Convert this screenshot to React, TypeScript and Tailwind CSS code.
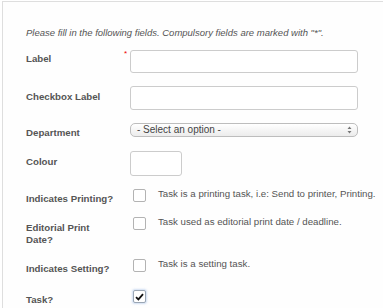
import React from "react";

const font = { fontFamily: '"Liberation Sans", Arial, sans-serif' };

function Checkbox({ checked }: { checked?: boolean }) {
  return (
    <div
      className={`flex h-[13px] w-[13px] shrink-0 items-center justify-center rounded-[2px] border bg-white ${
        checked ? "border-[#9aa6b4] shadow-[0_0_2px_1px_rgba(120,160,220,0.35)]" : "border-[#b3b3b3]"
      }`}
    >
      {checked && (
        <svg width="9" height="8" viewBox="0 0 9 8">
          <path d="M1 4.2 L3.4 6.4 L8 1.2" fill="none" stroke="#111" strokeWidth="1.8" />
        </svg>
      )}
    </div>
  );
}

function Row({
  label,
  required,
  height,
  pt,
  children,
}: {
  label: React.ReactNode;
  required?: boolean;
  height: string;
  pt: string;
  children?: React.ReactNode;
}) {
  return (
    <div className={`flex items-start ${height}`}>
      <div className={`flex w-[104px] shrink-0 justify-between pr-[3px] ${pt}`}>
        <span className="text-[9.7px] font-bold leading-[12px] text-[#555]">{label}</span>
        {required && <span className="-mt-[3px] text-[8px] leading-[8px] text-[#e00]">*</span>}
      </div>
      {children}
    </div>
  );
}

function CheckRow({ text, checked }: { text?: string; checked?: boolean }) {
  return (
    <div className="flex items-start pl-[3px]">
      <Checkbox checked={checked} />
      {text && (
        <span className="ml-[12px] -mt-[1px] whitespace-nowrap text-[9.7px] leading-[12px] text-[#555]">{text}</span>
      )}
    </div>
  );
}

export default function App() {
  return (
    <div style={font} className="h-[308px] w-[383px] overflow-hidden bg-white pl-[2px] pt-[1px]">
      <div className="h-full border-l border-t border-[#dedede] bg-[#fefefe] pl-[23px]">
        <p className="pt-[25px] text-[9.5px] italic leading-[12px] text-[#555]">
          Please fill in the following fields. Compulsory fields are marked with "*".
        </p>
        <div className="mt-[11px]">
          <Row label="Label" required height="h-[36px]" pt="pt-[3px]">
            <input className="h-[23px] w-[228px] rounded-[3px] border border-[#ccc] bg-white" />
          </Row>
          <Row label="Checkbox Label" height="h-[37px]" pt="pt-[5px]">
            <input className="h-[24px] w-[228px] rounded-[3px] border border-[#ccc] bg-white" />
          </Row>
          <Row label="Department" height="h-[28px]" pt="pt-[4px]">
            <div className="flex h-[14px] w-[228px] items-center justify-between rounded-[5px] border border-[#bdbdbd] bg-gradient-to-b from-white to-[#ececec] pl-[6px] pr-[5px]">
              <span className="text-[10px] leading-[12px] text-[#444]">- Select an option -</span>
              <svg width="5" height="8" viewBox="0 0 5 8">
                <path d="M0.5 3 L2.5 0.5 L4.5 3 Z M0.5 5 L2.5 7.5 L4.5 5 Z" fill="#777" />
              </svg>
            </div>
          </Row>
          <Row label="Colour" height="h-[38px]" pt="pt-[5px]">
            <input className="h-[25px] w-[52px] rounded-[3px] border border-[#ccc] bg-white" />
          </Row>
          <Row label="Indicates Printing?" height="h-[28px]" pt="pt-[4px]">
            <CheckRow text="Task is a printing task, i.e: Send to printer, Printing." />
          </Row>
          <Row
            label={
              <>
                Editorial Print
                <br />
                Date?
              </>
            }
            height="h-[42px]"
            pt="pt-[5px]"
          >
            <CheckRow text="Task used as editorial print date / deadline." />
          </Row>
          <Row label="Indicates Setting?" height="h-[31px]" pt="pt-[4px]">
            <CheckRow text="Task is a setting task." />
          </Row>
          <Row label="Task?" height="h-[20px]" pt="pt-[4px]">
            <CheckRow checked />
          </Row>
        </div>
      </div>
    </div>
  );
}
